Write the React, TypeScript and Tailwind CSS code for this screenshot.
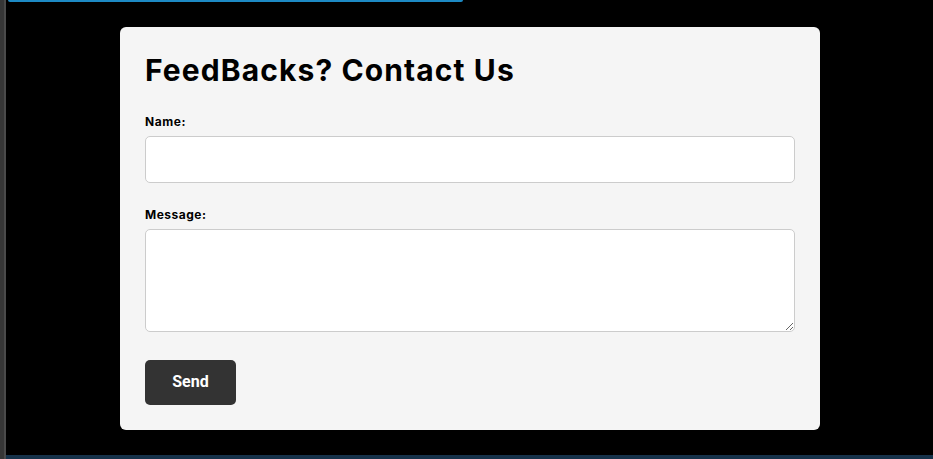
export default function App() {
  return (
    <div className="flex h-screen w-full overflow-hidden bg-black">
      <div className="h-full w-[6px] shrink-0 border-r-2 border-[#4a4a4a] bg-[#363636]" />
      <div className="flex min-w-0 flex-1 flex-col">
        <div className="ml-[2px] h-[2px] w-[455px] rounded-b-[3px] border-x border-b-2 border-[#1d8ac4]" />
        <div className="flex-1">
          <form
            className="ml-[114px] mt-[25px] flex w-[700px] flex-col rounded-[6px] bg-[#f5f5f5] px-[25px] pb-[25px] pt-[25px]"
            style={{ fontFamily: "Inter, 'Liberation Sans', sans-serif" }}
            onSubmit={(e) => e.preventDefault()}
          >
            <h2 className="text-[30px] font-bold leading-[37px] tracking-[1.1px] text-black">FeedBacks? Contact Us</h2>
            <label className="mt-[25px] text-[12px] font-bold leading-[15px] tracking-[0.6px] text-black">Name:</label>
            <input
              type="text"
              className="mt-[7px] h-[47px] w-full rounded-[5px] border border-[#cccccc] bg-white px-3 outline-none"
            />
            <label className="mt-[24px] text-[12px] font-bold leading-[15px] tracking-[0.5px] text-black">Message:</label>
            <textarea className="mt-[7px] h-[103px] w-full rounded-[5px] border border-[#cccccc] bg-white px-3 py-2 outline-none" />
            <div className="mt-[28px]">
              <button
                type="submit"
                className="h-[45px] w-[91px] rounded-[5px] bg-[#333333] pb-[2px] text-[16px] font-bold text-white"
                style={{ fontFamily: "Roboto, 'Liberation Sans', sans-serif" }}
              >
                Send
              </button>
            </div>
          </form>
        </div>
        <div className="h-[4px] w-full bg-[#16324a]" />
      </div>
    </div>
  );
}
